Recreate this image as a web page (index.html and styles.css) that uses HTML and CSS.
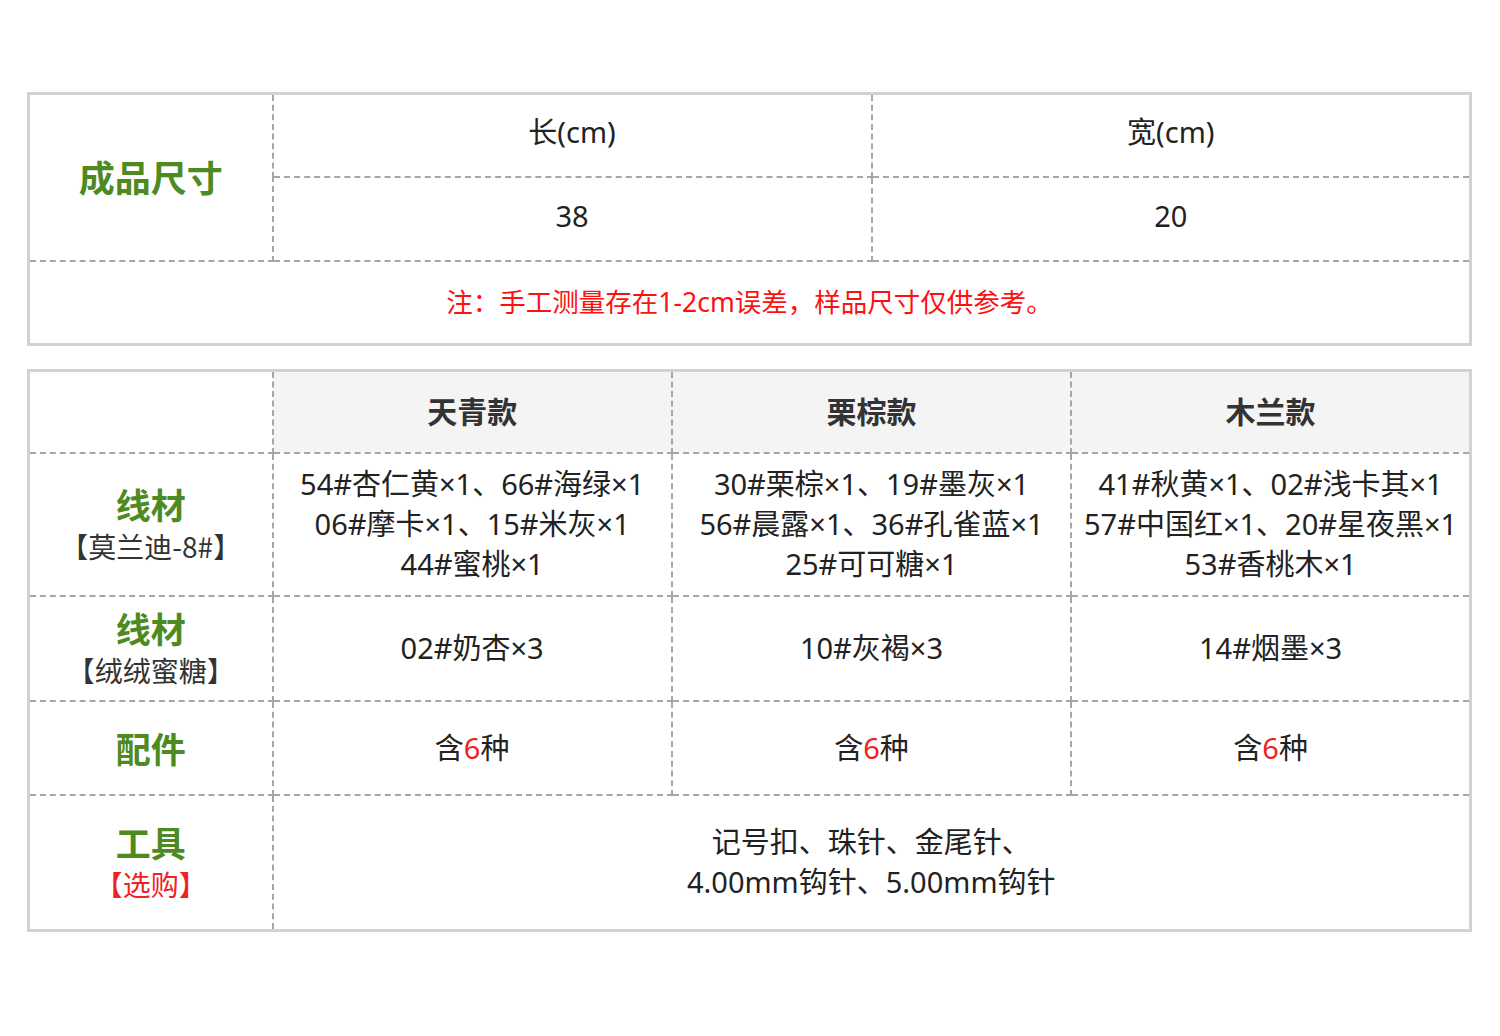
FILE: index.html
```html
<!DOCTYPE html>
<html lang="zh">
<head>
<meta charset="utf-8">
<link rel="stylesheet" href="styles.css">
</head>
<body>
<div class="page">
  <table class="tbl size">
    <colgroup><col class="c-label"><col><col></colgroup>
    <tr class="r83a">
      <td rowspan="2" class="label"><span class="green big">成品尺寸</span></td>
      <td class="up">长(cm)</td>
      <td class="up">宽(cm)</td>
    </tr>
    <tr class="r83b">
      <td class="up">38</td>
      <td class="up">20</td>
    </tr>
    <tr class="r83b">
      <td colspan="3" class="note">注：手工测量存在1-2cm误差，样品尺寸仅供参考。</td>
    </tr>
  </table>

  <table class="tbl spec">
    <colgroup><col class="c-label"><col><col><col></colgroup>
    <tr class="head">
      <td class="blank"></td>
      <th>天青款</th>
      <th>栗棕款</th>
      <th>木兰款</th>
    </tr>
    <tr class="r143">
      <td class="label"><div class="green">线材</div><div class="sub">【莫兰迪-8#】</div></td>
      <td>54#杏仁黄×1、66#海绿×1<br>06#摩卡×1、15#米灰×1<br>44#蜜桃×1</td>
      <td>30#栗棕×1、19#墨灰×1<br>56#晨露×1、36#孔雀蓝×1<br>25#可可糖×1</td>
      <td>41#秋黄×1、02#浅卡其×1<br>57#中国红×1、20#星夜黑×1<br>53#香桃木×1</td>
    </tr>
    <tr class="r105">
      <td class="label"><div class="green">线材</div><div class="sub">【绒绒蜜糖】</div></td>
      <td>02#奶杏×3</td>
      <td>10#灰褐×3</td>
      <td>14#烟墨×3</td>
    </tr>
    <tr class="r94">
      <td class="label"><div class="green">配件</div></td>
      <td>含<span class="red">6</span>种</td>
      <td>含<span class="red">6</span>种</td>
      <td>含<span class="red">6</span>种</td>
    </tr>
    <tr class="r134">
      <td class="label"><div class="green">工具</div><div class="sub red">【选购】</div></td>
      <td colspan="3">记号扣、珠针、金尾针、<br>4.00mm钩针、5.00mm钩针</td>
    </tr>
  </table>
</div>
</body>
</html>
```

FILE: styles.css
```css
html, body {
  margin: 0;
  padding: 0;
  background: #ffffff;
}
body {
  font-family: "Noto Sans", "Noto Sans CJK SC", sans-serif;
  color: #222222;
}
.page {
  padding: 92px 0 0 27px;
}
.tbl {
  border-collapse: collapse;
  width: 1445px;
  table-layout: fixed;
  border: 3px solid #d2d2d2;
}
.tbl td, .tbl th {
  border: 2px dashed #a6a6a6;
  text-align: center;
  vertical-align: middle;
  padding: 0;
  font-size: 29px;
  line-height: 40px;
  font-weight: 400;
}
.tbl td.up { padding-bottom: 6px; }
.c-label { width: 244px; }
.size { margin-bottom: 23px; }
.r83a { height: 83px; }
.r83b { height: 84px; }
.tbl td.note {
  color: #ff1010;
  font-size: 26.5px;
}
.green {
  color: #4e8a22;
  font-weight: 700;
  font-size: 35px;
  line-height: 44px;
  font-family: "Noto Sans CJK SC", sans-serif;
}
.big { font-size: 36px; }
.sub {
  font-size: 28px;
  line-height: 40px;
  color: #333333;
  font-family: "Noto Sans CJK SC", sans-serif;
}
.red { color: #ee2222; }
.sub.red { color: #ee2222; }
.head { height: 82px; }
.tbl .head th {
  background: #f4f4f4;
  font-weight: 700;
  font-size: 30px;
  color: #333333;
  padding-bottom: 4px;
  font-family: "Noto Sans CJK SC", sans-serif;
}
.head .blank { background: #ffffff; }
.r143 { height: 143px; }
.r105 { height: 105px; }
.r94 { height: 94px; }
.r134 { height: 136px; }
```
